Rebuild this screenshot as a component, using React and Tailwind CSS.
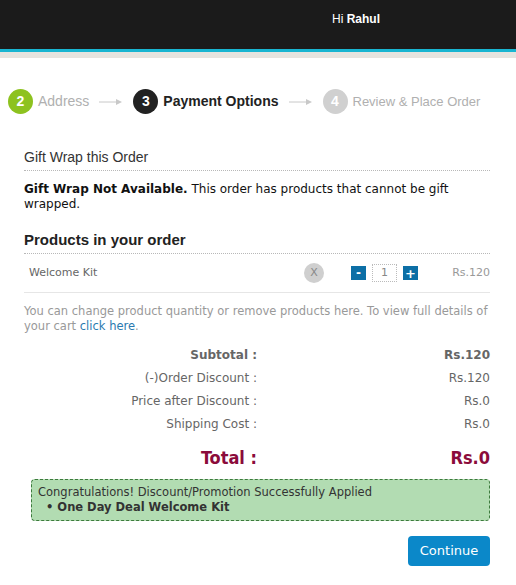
import React from 'react';

const verdana = { fontFamily: '"DejaVu Sans", Verdana, sans-serif' };

const Step = ({ num, label, circle, text }) => (
  <div className="flex items-center">
    <span className={`flex h-[25px] w-[25px] items-center justify-center rounded-full text-[14px] font-bold text-white ${circle}`}>
      {num}
    </span>
    <span className={`ml-[5px] ${text}`}>{label}</span>
  </div>
);

const Arrow = () => (
  <svg width="24" height="8" viewBox="0 0 24 8" className="mx-[10px]">
    <line x1="0" y1="4" x2="20" y2="4" stroke="#c8c8c8" strokeWidth="1" />
    <path d="M17 1 L23 4 L17 7 Z" fill="#c8c8c8" />
  </svg>
);

const SummaryRow = ({ label, value, bold }) => (
  <div className={`flex h-[23px] items-center text-[12px] text-[#666] ${bold ? 'font-bold' : ''}`}>
    <span className="w-[233px] text-right">{label}</span>
    <span className="flex-1 text-right">{value}</span>
  </div>
);

export default function App() {
  return (
    <div className="min-h-[585px] w-[516px] bg-white" style={{ fontFamily: '"Liberation Sans", Arial, sans-serif' }}>
      {/* Header */}
      <div className="h-[49px] bg-[#1b1b1b] pl-[332px] pt-[10px] text-[12px] text-white">
        Hi <span className="font-bold">Rahul</span>
      </div>
      <div className="h-[3px] bg-[#19b5d1]" />
      <div className="h-[6px] bg-[#e6e4df]" />

      {/* Steps */}
      <div className="mt-[31px] flex items-center pl-[8px]">
        <Step num="2" label="Address" circle="bg-[#8dc21f]" text="text-[14px] text-[#b0b0b0]" />
        <Arrow />
        <Step num="3" label="Payment Options" circle="bg-[#222]" text="text-[14px] font-bold text-[#222]" />
        <Arrow />
        <Step num="4" label="Review & Place Order" circle="bg-[#d0d0d0]" text="text-[13px] text-[#b0b0b0]" />
      </div>

      <div className="mx-[24px] mt-[35px] w-[466px]">
        {/* Gift wrap */}
        <div className="border-b border-dotted border-[#b8b8b8] pb-[4px] text-[14px] leading-[17px] text-[#333]">
          Gift Wrap this Order
        </div>
        <p className="mt-[11px] text-[12px] leading-[15px] text-[#111]" style={verdana}>
          <span className="font-bold">Gift Wrap Not Available.</span> This order has products that cannot be gift wrapped.
        </p>

        {/* Products */}
        <div className="mt-[19px] border-b border-dotted border-[#b8b8b8] pb-[4px] text-[15px] font-bold leading-[18px] text-[#222]">
          Products in your order
        </div>
        <div className="flex h-[39px] items-center border-b border-[#e6e6e6] text-[11px]" style={verdana}>
          <span className="ml-[5px] flex-1 text-[11px] text-[#666]">Welcome Kit</span>
          <span className="flex h-[20px] w-[20px] items-center justify-center rounded-full bg-[#cfcfcf] text-[11px] text-[#888]">X</span>
          <span className="ml-[27px] flex h-[14px] w-[15px] items-center justify-center bg-[#0c6fa6] text-[12px] font-bold leading-none text-white">-</span>
          <span className="ml-[6px] flex h-[18px] w-[25px] items-center justify-center border border-dotted border-[#bbb] text-[11px] text-[#888]">1</span>
          <span className="ml-[6px] flex h-[14px] w-[15px] items-center justify-center bg-[#0c6fa6] text-[13px] font-bold leading-none text-white">+</span>
          <span className="ml-auto w-[72px] text-right text-[11px] text-[#999]">Rs.120</span>
        </div>
        <p className="mt-[11px] text-[11.5px] leading-[15px] text-[#999]" style={verdana}>
          You can change product quantity or remove products here. To view full details of your cart <a className="text-[#2a7ab0]">click here</a>.
        </p>

        {/* Summary */}
        <div className="mt-[9px]" style={verdana}>
          <SummaryRow label="Subtotal :" value="Rs.120" bold />
          <SummaryRow label="(-)Order Discount :" value="Rs.120" />
          <SummaryRow label="Price after Discount :" value="Rs.0" />
          <SummaryRow label="Shipping Cost :" value="Rs.0" />
          <div
            className="mt-[10px] flex h-[24px] items-center text-[18px] font-bold text-[#8b0b3b]"
            style={{ fontFamily: '"DejaVu Sans Condensed", "DejaVu Sans", Tahoma, sans-serif' }}
          >
            <span className="w-[233px] text-right">Total :</span>
            <span className="flex-1 text-right">Rs.0</span>
          </div>

          {/* Promo */}
          <div className="ml-[7px] mt-[10px] rounded-[4px] border border-dashed border-[#3c7a3c] bg-[#b2dcb2] px-[6px] pb-[5px] pt-[5px] text-[11.5px] leading-[15px] text-[#333]">
            <div>Congratulations! Discount/Promotion Successfully Applied</div>
            <div className="pl-[8px] font-bold">• One Day Deal Welcome Kit</div>
          </div>

          <div className="mt-[15px] flex justify-end">
            <button className="h-[30px] w-[82px] rounded-[4px] bg-[#0b88c9] text-[13px] text-white">Continue</button>
          </div>
        </div>
      </div>
    </div>
  );
}
